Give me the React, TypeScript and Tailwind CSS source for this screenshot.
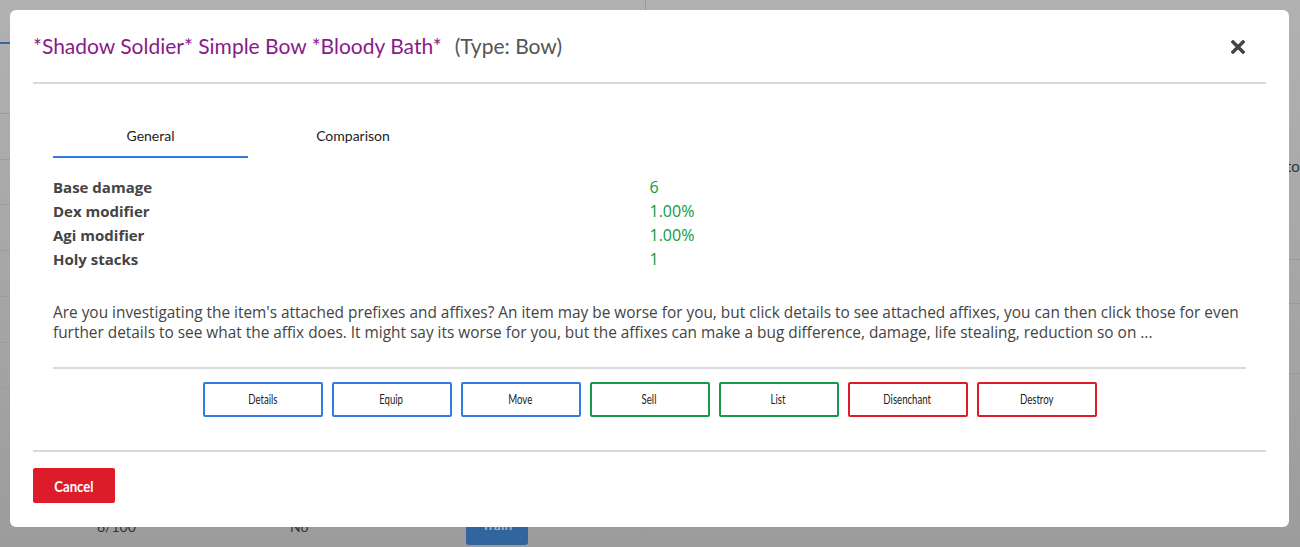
import React from "react";

const lato = { fontFamily: "Lato, 'Noto Sans', sans-serif" };
const open = { fontFamily: "'Open Sans', 'Noto Sans', sans-serif" };

const stats: [string, string][] = [
  ["Base damage", "6"],
  ["Dex modifier", "1.00%"],
  ["Agi modifier", "1.00%"],
  ["Holy stacks", "1"],
];

const buttons: { label: string; cls: string }[] = [
  { label: "Details", cls: "border-[#2f7de1]" },
  { label: "Equip", cls: "border-[#2f7de1]" },
  { label: "Move", cls: "border-[#2f7de1]" },
  { label: "Sell", cls: "border-[#16994a]" },
  { label: "List", cls: "border-[#16994a]" },
  { label: "Disenchant", cls: "border-[#dc1c28]" },
  { label: "Destroy", cls: "border-[#dc1c28]" },
];

function Backdrop() {
  const leftRows = [113, 159, 204, 250, 296, 342, 387, 433, 479];
  return (
    <div className="absolute inset-0 flex bg-gradient-to-b from-[#b1b1b1] to-[#9c9c9c]">
      <div className="relative w-[646px] border-r border-[#9a9a9a]">
        <div className="h-[2px] w-[12px] mt-[42px] bg-[#3a64a8]" />
        {leftRows.map((y) => (
          <div key={y} className="absolute left-0 right-0 h-px bg-[#9c9c9c]" style={{ top: y }} />
        ))}
        <div className="absolute top-[516px] left-[97px] text-[14px] text-[#333]">6/100</div>
        <div className="absolute top-[516px] left-[290px] text-[14px] text-[#333]">No</div>
        <div className="absolute top-[517px] left-[466px] w-[62px] h-[28px] rounded-[3px] bg-[#32649e] text-[#9fb4d0] text-[14px] leading-[16px] font-bold flex items-start justify-center">Train</div>
      </div>
      <div className="relative flex-1">
        <div className="absolute top-[155px] left-[640px] text-[15px] text-[#333]">to</div>
        {[259, 303, 373].map((y) => (
          <div key={y} className="absolute left-0 right-0 h-px bg-[#989898]" style={{ top: y }} />
        ))}
      </div>
    </div>
  );
}

export default function App() {
  return (
    <div className="relative w-full h-[547px] overflow-hidden" style={lato}>
      <Backdrop />
      <div className="absolute left-[10px] top-[10px] w-[1279px] h-[517px] bg-white rounded-[6px] px-[23px] flex flex-col">
        <div className="h-[74px] flex items-center border-b-2 border-[#dadada] shrink-0">
          <span className="text-[21px] text-[#8a1a8a]">*Shadow Soldier* Simple Bow *Bloody Bath*</span>
          <span className="text-[21px] text-[#555] ml-[13px]">(Type: Bow)</span>
          <div className="ml-auto mr-[21px] mt-[1px] flex items-center">
            <svg width="14" height="14" viewBox="0 0 14 14">
              <path d="M2 2 L12 12 M12 2 L2 12" stroke="#444" strokeWidth="3.4" strokeLinecap="square" />
            </svg>
          </div>
        </div>
        <div className="px-[20px] pt-[30px]">
          <div className="flex">
            <div className="w-[195px] h-[44px] flex items-center justify-center border-b-2 border-[#2f7de1] text-[14px] text-[#222]">General</div>
            <div className="w-[210px] h-[44px] flex items-center justify-center text-[14px] text-[#222] pb-[2px]">Comparison</div>
          </div>
          <div className="mt-[17px]" style={open}>
            {stats.map(([k, v]) => (
              <div key={k} className="grid grid-cols-2 h-[24px] items-center text-[15px]">
                <span className="font-bold text-[#444]">{k}</span>
                <span className="text-[#0b9b3c] text-[16px]">{v}</span>
              </div>
            ))}
          </div>
          <p className="mt-[32px] text-[15.4px] leading-[20px] text-[#444]" style={open}>
            Are you investigating the item's attached prefixes and affixes? An item may be worse for you, but click details to see attached affixes, you can then click those for even further details to see what the affix does. It might say its worse for you, but the affixes can make a bug difference, damage, life stealing, reduction so on ...
          </p>
          <div className="mt-[24px] h-[2px] bg-[#dadada]" />
          <div className="mt-[13px] flex justify-center gap-[9px]">
            {buttons.map((b) => (
              <button key={b.label} className={`w-[120px] h-[35px] border-2 rounded-[2px] bg-white text-[13px] text-[#222] flex items-center justify-center ${b.cls}`}>
                <span className="inline-block scale-x-[0.74]">{b.label}</span>
              </button>
            ))}
          </div>
        </div>
        <div className="mt-[33px] h-[2px] bg-[#dadada]" />
        <div className="mt-[16px]">
          <button className="w-[82px] h-[35px] rounded-[2px] bg-[#dc1c28] text-white text-[16px] font-bold flex items-center justify-center">
            <span className="inline-block scale-x-[0.82]">Cancel</span>
          </button>
        </div>
      </div>
    </div>
  );
}
